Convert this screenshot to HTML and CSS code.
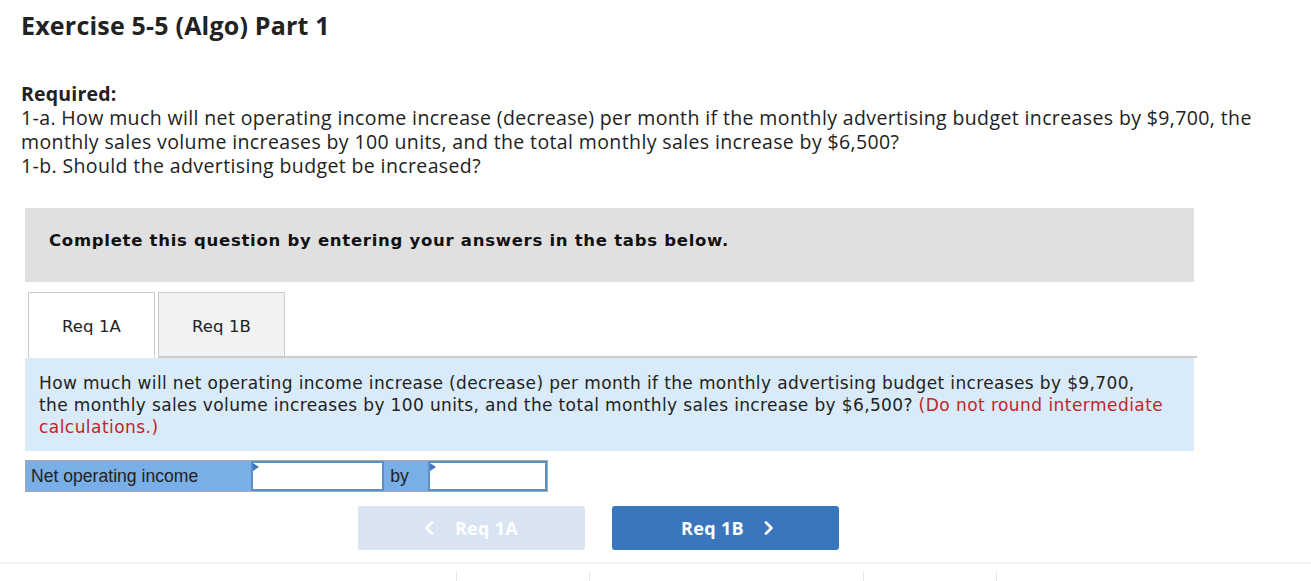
FILE: index.html
```html
<!DOCTYPE html>
<html>
<head>
<meta charset="utf-8">
<link rel="stylesheet" href="styles.css">
</head>
<body>
<div class="page">
  <h1 class="title">Exercise 5-5 (Algo) Part 1</h1>
  <div class="required">
    <div class="req-head">Required:</div>
    <div>1-a. How much will net operating income increase (decrease) per month if the monthly advertising budget increases by $9,700, the<br>monthly sales volume increases by 100 units, and the total monthly sales increase by $6,500?</div>
    <div>1-b. Should the advertising budget be increased?</div>
  </div>
  <div class="complete">Complete this question by entering your answers in the tabs below.</div>
  <div class="tabs">
    <div class="tab active">Req 1A</div>
    <div class="tab">Req 1B</div>
    <div class="tab-fill"></div>
  </div>
  <div class="question">How much will net operating income increase (decrease) per month if the monthly advertising budget increases by $9,700,<br>the monthly sales volume increases by 100 units, and the total monthly sales increase by $6,500? <span class="red">(Do not round intermediate<br>calculations.)</span></div>
  <div class="answer">
    <div class="label">Net operating income</div>
    <div class="input in1"><span class="tri"></span></div>
    <div class="by">by</div>
    <div class="input in2"><span class="tri"></span></div>
  </div>
  <div class="nav">
    <div class="btn prev"><svg class="chev left" width="10" height="14" viewBox="0 0 10 14"><polyline points="8,1.5 2.5,7 8,12.5" fill="none" stroke="#fff" stroke-width="2.6" stroke-linecap="round" stroke-linejoin="round"/></svg>Req 1A</div>
    <div class="btn next">Req 1B<svg class="chev right" width="10" height="14" viewBox="0 0 10 14"><polyline points="2,1.5 7.5,7 2,12.5" fill="none" stroke="#fff" stroke-width="2.6" stroke-linecap="round" stroke-linejoin="round"/></svg></div>
  </div>
  <div class="footer">
    <span class="vl v1"></span><span class="vl v2"></span><span class="vl v3"></span><span class="vl v4"></span>
  </div>
</div>
</body>
</html>
```

FILE: styles.css
```css
html, body { margin: 0; padding: 0; background: #fff; }
.page { width: 1311px; height: 581px; overflow: hidden; }
.title {
  font-family: "Open Sans", sans-serif;
  font-weight: 700;
  font-size: 25px;
  color: #222;
  margin: 0;
  padding: 10px 0 0 21px;
  height: 40px;
  line-height: 30px;
  letter-spacing: 0.2px;
}
.required {
  font-family: "Open Sans", sans-serif;
  font-size: 19.5px;
  line-height: 24px;
  color: #222;
  padding: 32px 0 0 21px;
  letter-spacing: 0.38px;
  white-space: nowrap;
}
.req-head { font-weight: 700; letter-spacing: 0.2px; }
.complete {
  margin: 30px 0 0 25px;
  width: 1145px;
  height: 74px;
  box-sizing: content-box;
  background: #e0e0e0;
  padding-left: 24px;
  font-family: "DejaVu Sans", Verdana, sans-serif;
  font-weight: 700;
  font-size: 16.5px;
  letter-spacing: 0.72px;
  line-height: 20px;
  color: #111;
}
.complete::before { content: ""; display: block; height: 23px; }
.tabs {
  display: flex;
  margin: 10px 0 0 28px;
  height: 66px;
}
.tab {
  width: 127px;
  box-sizing: border-box;
  border: 1px solid #ccc;
  border-bottom: 2px solid #ccc;
  background: #f2f2f2;
  font-family: "DejaVu Sans", Verdana, sans-serif;
  font-size: 16.5px;
  letter-spacing: 0.1px;
  color: #222;
  display: flex;
  align-items: center;
  justify-content: center;
  margin-right: 3px;
  padding-top: 3px;
}
.tab.active {
  background: #fff;
  border-bottom: none;
  padding-top: 1px;
}
.tab-fill {
  width: 912px;
  border-bottom: 2px solid #ccc;
  margin-left: -3px;
}
.question {
  margin: 0 0 0 25px;
  width: 1141px;
  background: #d9ebf9;
  padding: 14px 14px 13px 14px;
  height: 66px;
  font-family: "DejaVu Sans", Verdana, sans-serif;
  font-size: 17px;
  letter-spacing: 0.36px;
  line-height: 22px;
  color: #222;
  white-space: nowrap;
}
.red { color: #c0252b; letter-spacing: 0.45px; }
.answer {
  margin: 9px 0 0 25px;
  width: 523px;
  height: 32px;
  box-sizing: border-box;
  background: #7aaee6;
  border: 1px solid #aaa;
  display: flex;
  font-family: "Liberation Sans", Arial, sans-serif;
  font-size: 17.6px;
  color: #222;
}
.label { width: 222px; padding-left: 5px; line-height: 30px; }
.input {
  position: relative;
  background: #fff;
  border: 2px solid #5b8fc9;
  box-sizing: border-box;
  height: 30px;
}
.in1 { width: 134px; }
.in2 { width: 120px; }
.by { width: 44px; padding-left: 6px; line-height: 30px; box-sizing: border-box; }
.tri {
  position: absolute;
  left: 0; top: 0;
  width: 0; height: 0;
  border-top: 4px solid transparent;
  border-bottom: 4px solid transparent;
  border-left: 6px solid #3b78c0;
}
.nav {
  display: flex;
  gap: 27px;
  margin: 14px 0 0 358px;
}
.btn {
  width: 227px;
  height: 44px;
  border-radius: 3px;
  display: flex;
  align-items: center;
  justify-content: center;
  font-family: "Open Sans", sans-serif;
  font-weight: 700;
  font-size: 18px;
  letter-spacing: 0.3px;
  color: #fff;
}
.prev { background: #d8e4f2; }
.next { background: #3a76bb; }
.chev { display: block; }
.chev.left { margin-right: 21px; margin-left: -1px; }
.chev.right { margin-left: 20px; margin-right: -4px; }
.footer {
  margin-top: 12px;
  border-top: 2px solid #f5f5f5;
  height: 20px;
  position: relative;
}
.vl { position: absolute; top: 7px; width: 1px; height: 14px; background: #e6e6e6; }
.v1 { left: 456px; }
.v2 { left: 589px; }
.v3 { left: 863px; }
.v4 { left: 996px; }
```
